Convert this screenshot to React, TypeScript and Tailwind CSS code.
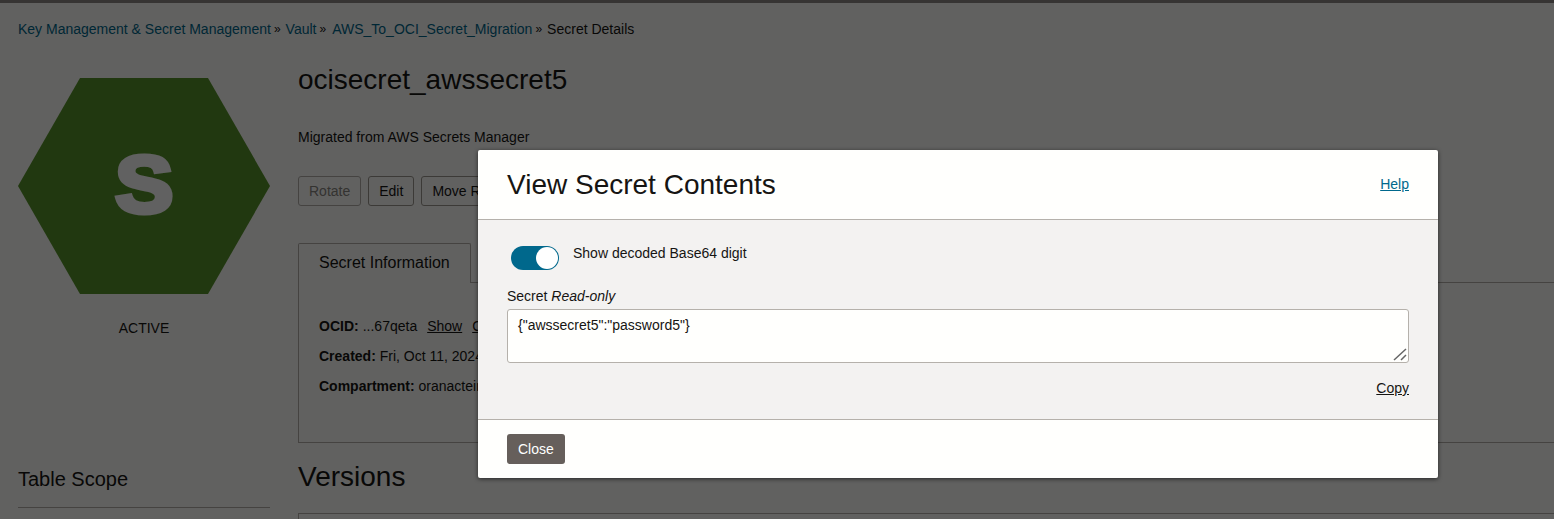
export default function App() {
  return (
    <div className="relative h-[519px] overflow-hidden bg-[#fffffd] font-['Liberation_Sans',Arial,sans-serif] text-[14px] text-[#161513]">
      {/* Top bar */}
      <div className="h-[3px] bg-[#8f8a86]" />

      {/* Breadcrumbs */}
      <nav className="mt-[18px] flex h-4 items-center pl-[18px] leading-4">
        <a className="text-[#00688c]">Key Management &amp; Secret Management</a>
        <span className="ml-[3px] mr-[5px] text-[12px]">»</span>
        <a className="text-[#00688c]">Vault</a>
        <span className="ml-[3px] mr-[6px] text-[12px]">»</span>
        <a className="text-[#00688c]">AWS_To_OCI_Secret_Migration</a>
        <span className="ml-[3px] mr-[5px] text-[12px]">»</span>
        <span>Secret Details</span>
      </nav>

      <div className="mt-[27px] flex pl-[18px]">
        {/* Left column */}
        <aside className="w-[252px] shrink-0">
          <div className="mt-[14px] flex h-[216px] w-[252px] items-center justify-center bg-[#58942a] pb-px text-[79px] font-bold text-white [clip-path:polygon(24.6%_0,75.4%_0,100%_50%,75.4%_100%,24.6%_100%,0_50%)]">
            <span className="inline-block scale-x-110 [-webkit-text-stroke:5px_white]">S</span>
          </div>
          <div className="mt-[26px] text-center leading-4">ACTIVE</div>
          <h2 className="mt-[131px] text-[20px] leading-6">Table Scope</h2>
          <div className="mt-4 border-t border-[#b5b1ab]" />
        </aside>

        {/* Main column */}
        <main className="ml-[28px] min-w-0 flex-1">
          <h1 className="text-[28px] leading-8">ocisecret_awssecret5</h1>
          <p className="mt-[33px] leading-4">Migrated from AWS Secrets Manager</p>

          <div className="mt-[31px] flex gap-[7px]">
            <button className="h-[30px] rounded-[3px] border border-[#b5b1ab] px-[10px] text-[#8a8682]">Rotate</button>
            <button className="h-[30px] rounded-[3px] border border-[#9e9892] px-[10px]">Edit</button>
            <button className="h-[30px] whitespace-nowrap rounded-[3px] border border-[#9e9892] px-[10px]">Move Resource</button>
          </div>

          {/* Tabs */}
          <div className="mt-[37px] flex h-[40px]">
            <div className="relative h-[40px] rounded-t-[2px] border border-b-0 border-[#b5b1ab] bg-[#fffffd] px-5 pt-[9px] text-[16px] leading-5">
              Secret Information
            </div>
          </div>
          <div className="-mt-px h-[161px] border border-r-0 border-[#b5b1ab] px-5 pt-[35px]">
            <div className="flex h-4 items-center leading-4 whitespace-nowrap">
              <b>OCID:</b>
              <span className="ml-1">...67qeta</span>
              <a className="ml-[10px] underline">Show</a>
              <a className="ml-[10px] underline">Copy</a>
            </div>
            <div className="mt-[14px] h-4 leading-4 whitespace-nowrap">
              <b>Created:</b> Fri, Oct 11, 2024
            </div>
            <div className="mt-[14px] h-4 leading-4 whitespace-nowrap">
              <b>Compartment:</b> oranacteins
            </div>
          </div>

          <h2 className="mt-[18px] text-[28px] leading-8">Versions</h2>
          <div className="mt-5 h-20 border border-r-0 border-[#b5b1ab]" />
        </main>
      </div>

      {/* Modal */}
      <div className="absolute inset-0 bg-black/[0.62] pl-[478px] pt-[150px]">
        <div className="flex h-[328px] w-[960px] flex-col rounded-[2px] bg-[#fffffd] shadow-[0_1px_4px_rgba(0,0,0,0.6)]">
          <header className="flex h-[70px] shrink-0 items-center justify-between border-b border-[#b5b1ab] px-[29px]">
            <h2 className="text-[28px] leading-8">View Secret Contents</h2>
            <a className="text-[#00688c] underline">Help</a>
          </header>

          <div className="flex h-[200px] shrink-0 flex-col border-b border-[#b5b1ab] bg-[#f3f2f1] px-[29px]">
            <div className="mt-[26px] flex items-start pl-1">
              <span className="relative h-6 w-12 rounded-full bg-[#00688c]">
                <span className="absolute right-[1px] top-[1px] h-[22px] w-[22px] rounded-full bg-white" />
              </span>
              <span className="-mt-px ml-[14px] leading-4">Show decoded Base64 digit</span>
            </div>
            <label className="mt-[18px] leading-4">
              Secret <i>Read-only</i>
            </label>
            <div className="relative mt-[5px] h-[54px]">
              <textarea
                readOnly
                value={'{"awssecret5":"password5"}'}
                className="block h-full w-full resize-none rounded-[3px] border border-[#b5b1ab] bg-[#fffffd] px-[10px] py-[7px] leading-4 outline-none"
              />
              {/* resize handle */}
              <svg className="pointer-events-none absolute bottom-[2px] right-[2px]" width="14" height="14" viewBox="0 0 14 14">
                <path d="M1 13 L13 2 M8 13 L13 8" stroke="#666" strokeWidth="1.5" fill="none" />
              </svg>
            </div>
            <a className="mt-[17px] self-end leading-4 underline">Copy</a>
          </div>

          <footer className="flex flex-1 items-center px-[29px]">
            <button className="h-[30px] rounded-[3px] bg-[#665f5b] px-[11px] text-white">Close</button>
          </footer>
        </div>
      </div>
    </div>
  )
}
